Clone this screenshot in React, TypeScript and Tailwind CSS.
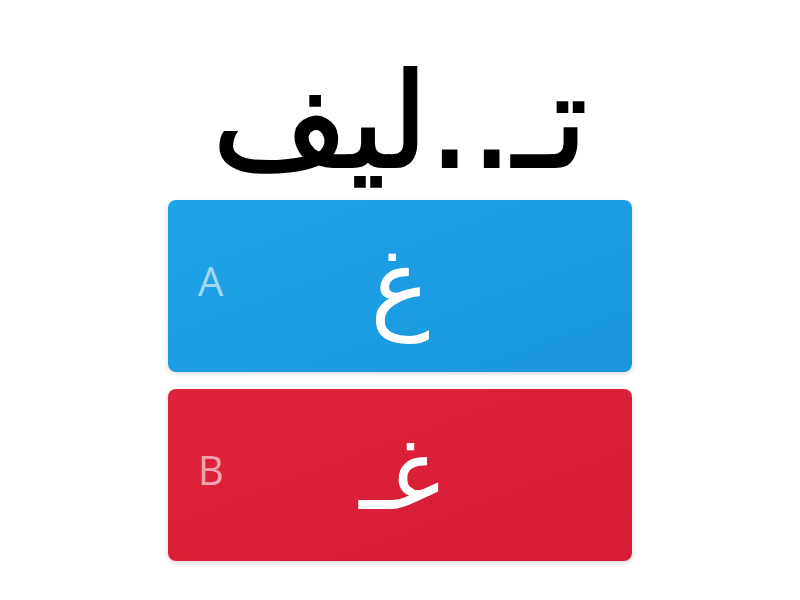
import React from "react";

const arabic = { fontFamily: '"DejaVu Sans", "Noto Sans", sans-serif' };

function Choice({ label, text, color }: { label: string; text: string; color: string }) {
	return (
		<div
			className={`relative flex h-[172px] w-[464px] items-center justify-center rounded-lg shadow-[0_2px_4px_rgba(0,0,0,0.15)] ${color}`}
		>
			<span
				className="absolute left-[30px] top-[61px] text-[40px] leading-none text-white/60"
				style={{ fontFamily: '"Open Sans", sans-serif' }}
			>
				{label}
			</span>
			<span className="text-[100px] leading-none text-white" style={arabic}>
				{text}
			</span>
		</div>
	);
}

export default function App() {
	return (
		<main className="flex h-[600px] w-[800px] flex-col items-center bg-white">
			<h1
				className="mt-[36px] h-[164px] text-[132px] leading-[170px] text-black [-webkit-text-stroke:2px_black]"
				style={arabic}
				dir="rtl"
			>
				تـ..ليف
			</h1>
			<div className="flex flex-col gap-[17px]">
				<Choice label="A" text="غ" color="bg-gradient-to-br from-[#1ea3e6] to-[#1a96de]" />
				<Choice label="B" text="غـ" color="bg-gradient-to-br from-[#de2239] to-[#d61d35]" />
			</div>
		</main>
	);
}
